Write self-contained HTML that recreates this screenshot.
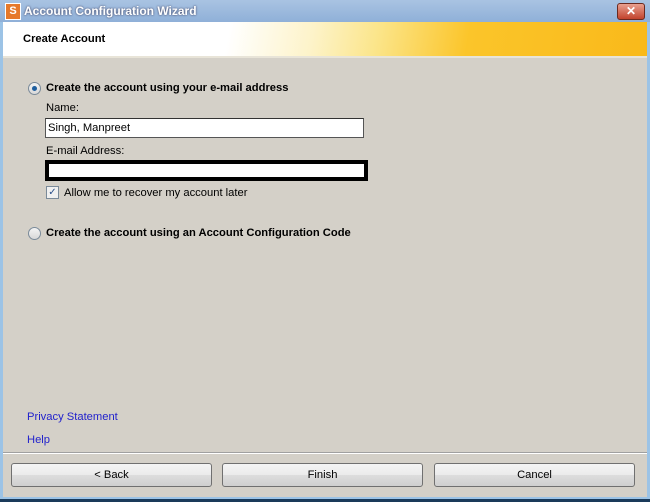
<!DOCTYPE html>
<html><head><style>
body{margin:0;width:650px;height:502px;overflow:hidden;background:#9cc3e6;font-family:"Liberation Sans",sans-serif;font-size:11.2px;line-height:14px;color:#000;position:relative}
.t{position:absolute;left:0;top:0;width:650px;height:22px;background:linear-gradient(#a9c3e2,#8fb0d8)}
.t span{position:absolute;left:24px;top:4px;color:#fff;font-weight:bold;font-size:12px;text-shadow:0 0 2px #335}
.ic{position:absolute;left:5px;top:3px;width:14px;height:15px;background:#e6782a;border:1px solid #fff;color:#fff;font-weight:bold;font-size:11px;text-align:center;line-height:15px}
.x{position:absolute;left:617px;top:3px;width:26px;height:15px;background:linear-gradient(#e8a090,#c2432c);border:1px solid #6b2a20;border-radius:3px;color:#fff;font-weight:bold;text-align:center;line-height:14px;font-size:12px}
.h{position:absolute;left:3px;top:22px;width:644px;height:34px;background:linear-gradient(100deg,#fff 0%,#fff 35%,#fdf3c9 48%,#fbe58a 58%,#fbc52a 72%,#f9b91a 100%);border-bottom:2px solid #e8e4d8}
.h span{position:absolute;left:20px;top:10px;font-weight:bold}
.b{position:absolute;left:3px;top:58px;width:644px;height:439px;background:#d4d0c8}
.a{position:absolute}
.r{position:absolute;width:11px;height:11px;border-radius:50%;border:1px solid #7a8a99;background:linear-gradient(#f4f4f4,#d8d8d8)}
.in{position:absolute;background:#fff}
.lnk{position:absolute;color:#2222cc}
.btn{position:absolute;top:463px;width:199px;height:22px;border:1px solid #707070;border-radius:3px;background:linear-gradient(#f4f4f4 0%,#ebebeb 50%,#dddddd 51%,#cfcfcf 100%);text-align:center;line-height:22px}
</style></head><body>
<div class="t"><div class="ic">S</div><span>Account Configuration Wizard</span><div class="x">✕</div></div>
<div class="h"><span>Create Account</span></div>
<div class="b"></div>
<div class="r" style="left:28px;top:82px"><div style="position:absolute;left:3px;top:3px;width:5px;height:5px;border-radius:50%;background:#1f5f9f"></div></div>
<div class="a" style="left:46px;top:81px;font-weight:bold">Create the account using your e-mail address</div>
<div class="a" style="left:46px;top:101px">Name:</div>
<div class="in" style="left:45px;top:118px;width:317px;height:18px;border:1px solid #555;border-top-color:#333"><span style="position:absolute;left:2px;top:2px">Singh, Manpreet</span></div>
<div class="a" style="left:46px;top:144px">E-mail Address:</div>
<div class="in" style="left:45px;top:160px;width:315px;height:13px;border:4px solid #000"></div>
<div class="a" style="left:46px;top:186px;width:11px;height:11px;border:1px solid #7a8a99;background:#f0f0f0;color:#2a4f8a;font-size:10px;line-height:11px;text-align:center">✓</div>
<div class="a" style="left:64px;top:186px">Allow me to recover my account later</div>
<div class="r" style="left:28px;top:227px"></div>
<div class="a" style="left:46px;top:226px;font-weight:bold">Create the account using an Account Configuration Code</div>
<div class="lnk" style="left:27px;top:410px">Privacy Statement</div>
<div class="lnk" style="left:27px;top:433px">Help</div>
<div class="a" style="left:3px;top:452px;width:644px;height:1px;background:#a0a0a0;border-bottom:1px solid #fff"></div>
<div class="btn" style="left:11px">&lt; Back</div>
<div class="btn" style="left:222px">Finish</div>
<div class="btn" style="left:434px">Cancel</div>
<div class="a" style="left:0;top:499px;width:650px;height:3px;background:#1a3a5a"></div>
</body></html>
